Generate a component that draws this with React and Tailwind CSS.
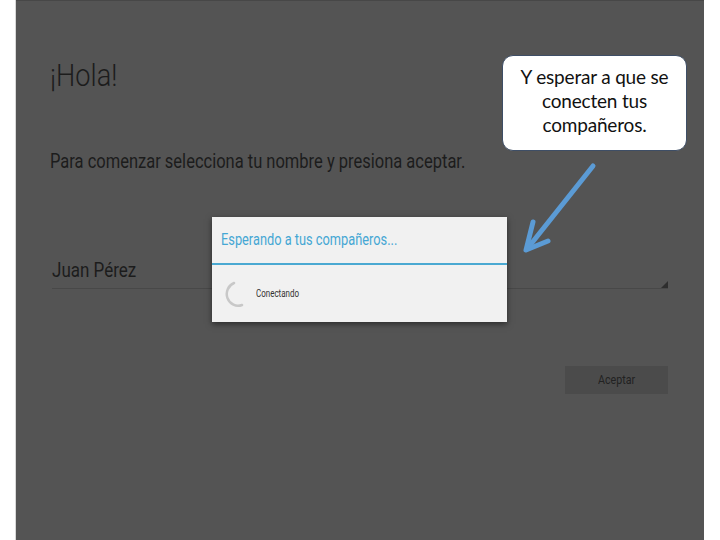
import React from "react";

const Spinner = () => (
  <svg width="24" height="28" viewBox="0 0 24 28">
    <path
      d="M12 3 A10.5 11 0 1 0 20 25"
      fill="none"
      stroke="#c8c8c8"
      strokeWidth="2.5"
      strokeLinecap="round"
    />
  </svg>
);

const Arrow = () => (
  <svg width="90" height="100" viewBox="0 0 90 100" className="absolute left-[496px] top-[158px]">
    <g stroke="#5b9bd5" strokeWidth="5" strokeLinecap="round" strokeLinejoin="round" fill="none">
      <path d="M81 7 L15 90" />
      <path d="M21 63 L14 91 L36 82" />
    </g>
  </svg>
);

export default function App() {
  return (
    <div className="w-[720px] h-[540px] bg-white flex overflow-hidden">
      <div className="ml-[15px] w-px bg-[#d8d8d8]" />
      <div
        className="relative w-[688px] h-[540px] bg-[#545454] border-t border-[#474747] text-[#1c1c1c] flex flex-col"
        style={{ fontFamily: "Roboto, 'Noto Sans', sans-serif" }}
      >
        <div className="pl-[34px] pr-[36px] flex flex-col">
          <h1 className="mt-[52px] text-[32px] font-light leading-[44px] origin-left scale-x-[0.85]">¡Hola!</h1>
          <p className="mt-[50px] text-[20px] leading-[28px] origin-left scale-x-[0.825] whitespace-nowrap">
            Para comenzar selecciona tu nombre y presiona aceptar.
          </p>
          <div className="mt-[76px] ml-[2px] relative border-b border-[#484848] h-[38px] flex items-center">
            <span className="text-[20px] leading-[28px] origin-left scale-x-[0.85]">Juan Pérez</span>
            <span className="absolute right-0 bottom-0 w-0 h-0 border-l-[7px] border-l-transparent border-b-[7px] border-b-[#2e2e2e]" />
          </div>
          <div className="mt-[77px] self-end">
            <button className="w-[103px] h-[28px] bg-[#4b4b4b] text-[#222] flex items-center justify-center">
              <span className="text-[13px] scale-x-[0.82]">Aceptar</span>
            </button>
          </div>
        </div>

        {/* Dialog */}
        <div className="absolute left-[196px] top-[216px] w-[295px] h-[105px] bg-[#f1f1f1] shadow-[0_2px_6px_rgba(0,0,0,0.5)] flex flex-col">
          <div className="h-[48px] px-[9px] flex items-center border-b-2 border-[#4aa9d2]">
            <span className="text-[16px] text-[#45a7d4] origin-left scale-x-[0.8] whitespace-nowrap">
              Esperando a tus compañeros...
            </span>
          </div>
          <div className="flex-1 flex items-center pl-[10px] gap-[10px]">
            <Spinner />
            <span className="text-[10px] text-[#333] origin-left scale-x-[0.8]">Conectando</span>
          </div>
        </div>

        {/* Callout */}
        <div className="absolute left-[486px] top-[54px] w-[185px] h-[96px] bg-white rounded-[11px] border border-[#3e4e66] flex items-center justify-center text-center pb-[5px]">
          <p
            className="text-[19px] leading-[24px] text-[#111] tracking-[-0.01em]"
            style={{ fontFamily: "Lato, 'Open Sans', sans-serif" }}
          >
            Y esperar a que se
            <br />
            conecten tus
            <br />
            compañeros.
          </p>
        </div>

        <Arrow />
      </div>
    </div>
  );
}
